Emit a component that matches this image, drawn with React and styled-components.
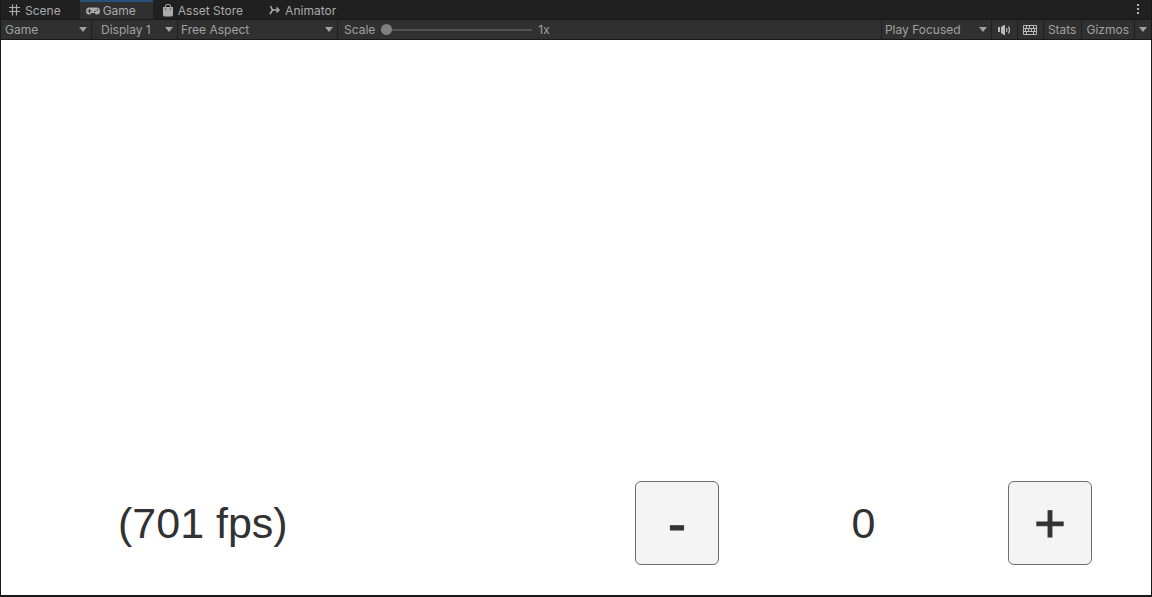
import * as React from "react";
import { useState } from "react";
import styled, { createGlobalStyle } from "styled-components";

const TABS = [
  { name: "Scene", Icon: SceneIcon },
  { name: "Game", Icon: GamepadIcon },
  { name: "Asset Store", Icon: BagIcon },
  { name: "Animator", Icon: AnimatorIcon },
];

function SceneIcon() {
  return (
    <svg width="16" height="16" viewBox="0 0 16 16" stroke="currentColor" fill="none">
      <path strokeWidth="1.2" d="M5.5 1.5v11M9.5 1.5v11M2 4.5h11M2 8.5h11" />
    </svg>
  );
}

function GamepadIcon() {
  return (
    <svg width="16" height="16" viewBox="0 0 16 16">
      <path
        fill="currentColor"
        d="M4.6 4.5h6.8A3.6 3.6 0 0 1 15 8.2c0 2-1.2 3.3-2.9 3.3-1.3 0-2-.6-2.7-1.5H6.6c-.7.9-1.4 1.500-2.700 1.500C2.200 11.500 1 10.200 1 8.200a3.600 3.600 0 0 1 3.600-3.700z"
      />
      <path stroke="#303030" d="M4.5 6v4M2.5 8h4" />
      <circle cx="10" cy="8.5" r="0.8" fill="#303030" />
      <circle cx="12.5" cy="7" r="0.8" fill="#303030" />
    </svg>
  );
}

function BagIcon() {
  return (
    <svg width="16" height="16" viewBox="0 0 16 16">
      <path fill="none" stroke="currentColor" d="M5.5 5V3q0-1.500 1.500-1.500h2q1.500 0 1.500 1.500v2" />
      <path fill="currentColor" d="M3 4h10v8q0 1.500-1.500 1.500h-7Q3 13.500 3 12z" />
      <path fill="#202020" d="M5 5.500h1v1H5zM10 5.500h1v1h-1z" />
    </svg>
  );
}

function AnimatorIcon() {
  return (
    <svg width="16" height="16" viewBox="0 0 16 16" fill="none" stroke="currentColor">
      <path strokeWidth="1.5" d="M3.500 3l2 4H12M3 11l2.500-4" />
      <path strokeWidth="1.5" d="M9.500 4.500L12 7 9.500 9.500" />
    </svg>
  );
}

function SpeakerIcon() {
  return (
    <svg width="16" height="16" viewBox="0 0 16 16">
      <path fill="currentColor" d="M2 5h2v5H2zM5 5l3-2h1v10H8l-3-2z" />
      <path
        fill="none"
        stroke="currentColor"
        strokeWidth="1.2"
        d="M10.500 6q1 2 0 4M12.500 4.500q2 3.500 0 7"
      />
    </svg>
  );
}

function KeyboardIcon() {
  return (
    <svg width="16" height="16" viewBox="0 0 16 16" fill="none" stroke="currentColor">
      <path d="M1.500 3.500h13v9h-13zM1 6.500h14M1 9.500h14M4.500 3v3.500M7.500 3v3.500M11.500 3v3.500M3.500 6.500v3M6.500 6.500v3M9.500 6.500v3M12.500 6.500v3M4.500 9.500v3M11.500 9.500v3" />
    </svg>
  );
}

function Caret() {
  return (
    <svg width="8" height="5" viewBox="0 0 8 5" aria-hidden="true">
      <path fill="currentColor" d="M0 0h8L4 5z" />
    </svg>
  );
}

const Dropdown = ({ label, options, width, inset }) => (
  <SelectBox $width={width}>
    <Select aria-label={label} $inset={inset}>
      {options.map((option) => (
        <option key={option}>{option}</option>
      ))}
    </Select>
    <Caret />
  </SelectBox>
);

export default function App() {
  const [active, setActive] = useState("Game");
  const [scale, setScale] = useState(1);
  const [count, setCount] = useState(0);

  return (
    <Window>
      <GlobalStyle />
      <TabBar>
        {TABS.map(({ name, Icon }) => (
          <Tab key={name} $active={name === active} onClick={() => setActive(name)}>
            <Icon />
            {name}
          </Tab>
        ))}
        <MenuButton aria-label="Tab options">
          <svg width="4" height="12" viewBox="0 0 4 12" fill="currentColor">
            <path d="M1 0h2v2H1zM1 4h2v2H1zM1 8h2v2H1z" />
          </svg>
        </MenuButton>
      </TabBar>
      <Toolbar>
        <Dropdown label="View" options={["Game", "Simulator"]} width={91} inset={4} />
        <Dropdown label="Display" options={["Display 1", "Display 2"]} width={86} inset={9} />
        <Dropdown label="Aspect" options={["Free Aspect", "16:9 Aspect"]} width={160} inset={3} />
        <ScaleGroup>
          <label htmlFor="scale">Scale</label>
          <Slider
            id="scale"
            type="range"
            min="1"
            max="5"
            value={scale}
            onChange={(e) => setScale(Number(e.target.value))}
          />
          <span>{scale}x</span>
        </ScaleGroup>
        <Dropdown label="Play mode" options={["Play Focused", "Play Maximized"]} width={110} inset={3} />
        <ToolButton aria-label="Mute audio" $bright>
          <SpeakerIcon />
        </ToolButton>
        <ToolButton aria-label="Shortcuts" $bright>
          <KeyboardIcon />
        </ToolButton>
        <ToolButton>Stats</ToolButton>
        <ToolButton>Gizmos</ToolButton>
        <GizmosMenu aria-label="Gizmos options">
          <Caret />
        </GizmosMenu>
      </Toolbar>
      <GameView>
        <Hud>
          <Readout>(701 fps)</Readout>
          <Counter>
            <StepButton onClick={() => setCount(count - 1)}>-</StepButton>
            <Readout>{count}</Readout>
            <StepButton onClick={() => setCount(count + 1)}>+</StepButton>
          </Counter>
        </Hud>
      </GameView>
    </Window>
  );
}

const GlobalStyle = createGlobalStyle`
  * {
    box-sizing: border-box;
  }
  body {
    margin: 0;
    background: #18181b;
  }
  button, select, input {
    margin: 0;
    border: 0;
    font: inherit;
    color: inherit;
    background: none;
  }
  svg {
    flex: none;
    display: block;
  }
`;

const Window = styled.div`
  display: flex;
  flex-direction: column;
  min-height: 100vh;
  padding: 0 1px 2px;
  background: #18181b;
  color: #a0a0a0;
  font-family: Inter, sans-serif;
  font-size: 12px;
  line-height: 16px;
`;

const TabBar = styled.div`
  display: flex;
  gap: 2px;
  height: 19px;
  padding-left: 1px;
  background: #202020;
`;

const Tab = styled.button`
  display: flex;
  align-items: center;
  gap: 2px;
  padding: 2px 17px 0 5px;
  white-space: nowrap;
  color: #ababab;
  background: ${(p) => (p.$active ? "#303030" : "transparent")};
  box-shadow: ${(p) => (p.$active ? "inset 0 2px #28507a" : "none")};
`;

const MenuButton = styled.button`
  display: flex;
  align-items: center;
  margin-left: auto;
  padding: 0 11px;
  color: #b4b4b4;
`;

const Toolbar = styled.div`
  display: flex;
  height: 21px;
  border-top: 1px solid #1a1a1a;
  border-bottom: 1px solid #1a1a1a;
  background: #303030;
`;

const SelectBox = styled.div`
  position: relative;
  flex: none;
  width: ${(p) => p.$width}px;
  border-right: 1px solid #1f1f1f;
  svg {
    position: absolute;
    right: 4px;
    top: 7px;
    pointer-events: none;
  }
`;

const Select = styled.select`
  appearance: none;
  width: 100%;
  height: 19px;
  padding: 0 14px 0 ${(p) => p.$inset}px;
  outline: none;
`;

const ScaleGroup = styled.div`
  display: flex;
  flex: 1;
  align-items: center;
  gap: 6px;
  padding-left: 6px;
  border-right: 1px solid #1f1f1f;
`;

const Slider = styled.input`
  appearance: none;
  width: 151px;
  height: 11px;
  background: linear-gradient(#505050, #505050) center / 100% 2px no-repeat;
  &::-webkit-slider-thumb {
    appearance: none;
    width: 11px;
    height: 11px;
    border-radius: 50%;
    background: #7f7f7f;
  }
`;

const ToolButton = styled.button`
  display: flex;
  align-items: center;
  padding: 0 5px 0 4px;
  border-right: 1px solid #1f1f1f;
  color: ${(p) => (p.$bright ? "#b8b8b8" : "inherit")};
`;

const GizmosMenu = styled.button`
  padding: 0 4px;
`;

const GameView = styled.main`
  display: flex;
  flex: 1;
  align-items: flex-end;
  background: #fff;
  color: #323232;
  font-family: "Liberation Sans", Arial, sans-serif;
`;

const Hud = styled.div`
  display: flex;
  flex: 1;
  align-items: center;
  justify-content: space-between;
  padding: 0 59px 30px 117px;
`;

const Readout = styled.output`
  font-size: 43px;
  line-height: 52px;
`;

const Counter = styled.div`
  display: flex;
  align-items: center;
  justify-content: space-between;
  width: 457px;
`;

const StepButton = styled.button`
  width: 84px;
  height: 84px;
  padding: 0;
  border: 1px solid #6e6e6e;
  border-radius: 6px;
  background: #f4f4f4;
  font-size: 54px;
  line-height: 64px;
  -webkit-text-stroke: 1px currentColor;
`;
